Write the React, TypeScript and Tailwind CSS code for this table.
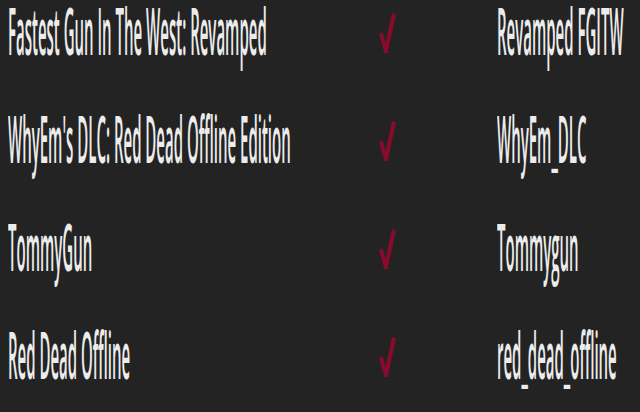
const rows = [
  { title: "Fastest Gun In The West: Revamped", id: "Revamped FGITW" },
  { title: "WhyEm's DLC: Red Dead Offline Edition", id: "WhyEm_DLC" },
  { title: "TommyGun", id: "Tommygun" },
  { title: "Red Dead Offline", id: "red_dead_offline" },
];

function Check() {
  return (
    <svg width="19" height="42" viewBox="0 0 19 42" className="mt-[12px] block">
      <path
        d="M1 22 L4.8 20.5 L7.6 31 L14 1 L18 2.5 L9.5 41 L6.5 41 Z"
        fill="#8a0a2d"
      />
    </svg>
  );
}

function Tall({ children }: { children: string }) {
  return (
    <div className="flex items-center h-[61px]">
      <span className="inline-block origin-center scale-y-[4.39] whitespace-nowrap">
        {children}
      </span>
    </div>
  );
}

export default function App() {
  return (
    <div
      className="w-[640px] h-[412px] overflow-hidden bg-[#232323] text-[#ececec] pl-[8px]"
      style={{ fontFamily: '"Open Sans", "Noto Sans", sans-serif' }}
    >
      <div className="flex flex-col gap-[42px]">
        {rows.map((row) => (
          <div
            key={row.id}
            className="grid grid-cols-[370px_119px_1fr] h-[66px] text-[15px] leading-[11px] font-semibold"
          >
            <Tall>{row.title}</Tall>
            <Check />
            <Tall>{row.id}</Tall>
          </div>
        ))}
      </div>
    </div>
  );
}
